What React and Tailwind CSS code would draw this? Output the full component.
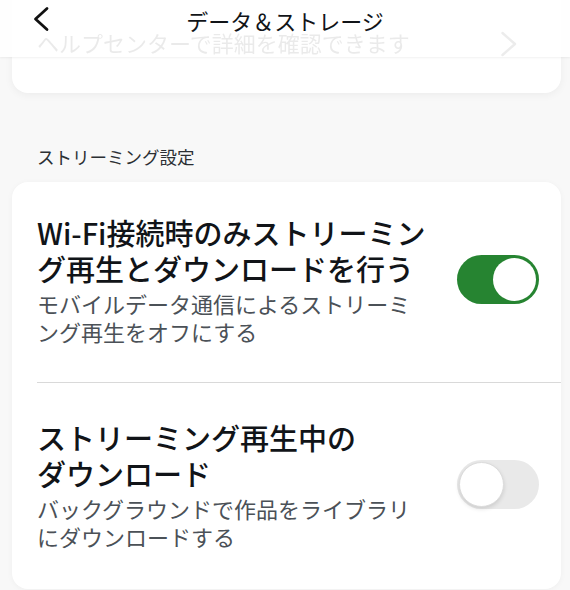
import React from "react";

const FONT = {
  fontFamily: '"Noto Sans CJK JP", "Noto Sans", sans-serif',
};

function Toggle({ on }) {
  if (on) {
    return (
      <div className="w-[82px] h-[49px] shrink-0 rounded-full bg-[#268431] p-[3px] flex justify-end">
        <div className="w-[43px] h-[43px] rounded-full bg-white" />
      </div>
    );
  }
  return (
    <div className="w-[82px] h-[49px] shrink-0 rounded-full bg-[#e9e9e9] p-[2px] flex justify-start">
      <div className="w-[45px] h-[45px] rounded-full bg-white border border-[#dcdcdc] shadow-[0_2px_4px_rgba(0,0,0,0.12)]" />
    </div>
  );
}

function SettingRow({ title, subtitle, on }) {
  return (
    <div className="flex items-center pl-[25px] pr-[22px] gap-[20px]">
      <div className="flex-1">
        <div className="text-[29px] leading-[36px] font-medium text-[#111418]">
          {title}
        </div>
        <div className="text-[22px] leading-[28px] text-[#4b5157] mt-[3px]">
          {subtitle}
        </div>
      </div>
      <Toggle on={on} />
    </div>
  );
}

export default function App() {
  return (
    <div
      className="relative w-[570px] h-[590px] overflow-hidden bg-[#f8f8f8]"
      style={FONT}
    >
      {/* header, over the scrolled content */}
      <div className="absolute top-0 left-0 right-0 h-[57px] z-10 bg-[#ffffffdc] shadow-[0_1px_2px_rgba(0,0,0,0.06)]">
        <div className="relative h-full flex justify-center pt-[5px]">
          <svg
            className="absolute left-[30px] top-[6px]"
            width="22"
            height="26"
            viewBox="0 0 22 26"
            fill="none"
          >
            <path
              d="M17 2.5 L5.5 13 L17 23.5"
              stroke="#111"
              strokeWidth="2.8"
              strokeLinecap="round"
              strokeLinejoin="round"
            />
          </svg>
          <div className="text-[22px] leading-[30px] text-[#111418]">
            データ＆ストレージ
          </div>
        </div>
      </div>

      {/* help card, scrolled partly under the header */}
      <div className="ml-[12px] mr-[9px] h-[93px] bg-white rounded-b-2xl shadow-[0_2px_8px_rgba(0,0,0,0.05)] flex items-start justify-between pl-[25px] pr-[42px] pt-[28px]">
        <div className="text-[22px] leading-[28px] text-[#6a6a6a] blur-[0.6px]">
          ヘルプセンターで詳細を確認できます
        </div>
        <svg width="20" height="28" viewBox="0 0 20 28" fill="none" className="mt-[2px]">
          <path
            d="M3.5 3 L16 14 L3.5 25"
            stroke="#777"
            strokeWidth="2.5"
            strokeLinecap="round"
            strokeLinejoin="round"
          />
        </svg>
      </div>

      <div className="pl-[37px] mt-[52px] text-[17.5px] leading-[24px] text-[#2b2f33]">
        ストリーミング設定
      </div>

      <div className="mt-[13px] ml-[12px] mr-[9px] bg-white rounded-2xl shadow-[0_1px_6px_rgba(0,0,0,0.04)] pt-[32px] pb-[39px]">
        <SettingRow
          on
          title={
            <>
              Wi-Fi接続時のみストリーミン
              <br />
              グ再生とダウンロードを行う
            </>
          }
          subtitle={
            <>
              モバイルデータ通信によるストリーミ
              <br />
              ング再生をオフにする
            </>
          }
        />
        <div className="ml-[25px] h-px bg-[#d9d9d9] mt-[37px] mb-[36px]" />
        <SettingRow
          on={false}
          title={
            <>
              ストリーミング再生中の
              <br />
              ダウンロード
            </>
          }
          subtitle={
            <>
              バックグラウンドで作品をライブラリ
              <br />
              にダウンロードする
            </>
          }
        />
      </div>
    </div>
  );
}
